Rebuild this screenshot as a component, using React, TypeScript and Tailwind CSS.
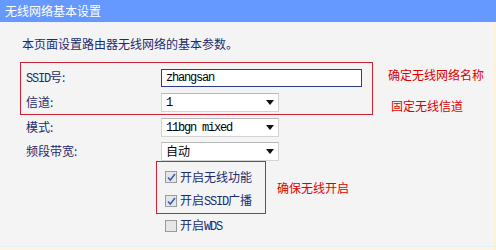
const CJK = "font-['Noto_Sans_CJK_SC','Noto_Sans',sans-serif]";
const MONO = "font-['Liberation_Mono','Noto_Sans_CJK_SC',monospace]";

function Latin({ children }: { children: React.ReactNode }) {
  return <span className={`${MONO} text-[12px] tracking-[-1.2px]`}>{children}</span>;
}

function Select({ value }: { value: React.ReactNode }) {
  return (
    <div className="flex h-[19px] w-[118px] items-center justify-between border border-[#d4d4d4] border-t-[#b8b8b8] bg-white pl-[4px] pr-[4px] text-[12px] text-black">
      <span className="leading-none">{value}</span>
      <svg width="8" height="5" viewBox="0 0 8 5">
        <path d="M0 0h8L4 5z" fill="#111" />
      </svg>
    </div>
  );
}

function Checkbox({ checked }: { checked: boolean }) {
  return (
    <div className="flex h-[12px] w-[12px] items-center justify-center border border-[#9a9a9a] bg-[#e6e6e6]">
      {checked && (
        <svg width="9" height="9" viewBox="0 0 9 9">
          <path d="M1 4.5l2.3 2.5L8 1" stroke="#3a5fb0" strokeWidth="1.6" fill="none" />
        </svg>
      )}
    </div>
  );
}

function Row({ label, children }: { label: React.ReactNode; children: React.ReactNode }) {
  return (
    <div className="flex h-[24px] items-center">
      <div className="w-[135px] text-[12px] text-[#1c2b6e]">{label}</div>
      {children}
    </div>
  );
}

function CheckRow({ checked, label }: { checked: boolean; label: React.ReactNode }) {
  return (
    <div className="flex h-[24px] items-center gap-[3px] text-[12px] text-[#1c2b6e]">
      <Checkbox checked={checked} />
      <span>{label}</span>
    </div>
  );
}

export default function App() {
  return (
    <div className={`${CJK} relative h-[250px] w-[496px] overflow-hidden bg-[#f4f4f4]`}>
      <div className="flex h-[22px] items-center bg-[#6699ff] pl-[5px] text-[12px] text-white">
        无线网络基本设置
      </div>
      <div className="h-px bg-[#eef3ff]" />

      <div className="pl-[22px] pt-[14px] text-[12px] leading-[14px] text-[#1c2b6e]">
        本页面设置路由器无线网络的基本参数。
      </div>

      <div className="mt-[11px] flex items-start">
        <div className="ml-[20px] w-[353px] border border-[#cc2233] pl-[5px] pt-[3px]">
          <Row label={<><Latin>SSID</Latin>号:</>}>
            <div className="flex h-[18px] w-[201px] items-center border border-[#2b3a86] bg-white pl-[4px] text-black">
              <Latin>zhangsan</Latin>
            </div>
          </Row>
          <Row label="信道:">
            <Select value={<Latin>1</Latin>} />
          </Row>
        </div>
        <div className="ml-[15px] flex flex-col text-[12px] text-[#dd0000]">
          <span className="mt-[6px] leading-[14px]">确定无线网络名称</span>
          <span className="ml-[3px] mt-[17px] leading-[14px]">固定无线信道</span>
        </div>
      </div>

      <div className="pl-[26px]">
        <Row label="模式:">
          <Select value={<Latin>11bgn mixed</Latin>} />
        </Row>
        <Row label="频段带宽:">
          <Select value="自动" />
        </Row>
      </div>

      <div className="-mt-[2px] flex items-start">
        <div className="ml-[156px] w-[110px] border border-[#cc2233] pl-[8px] pt-[3px]">
          <CheckRow checked label="开启无线功能" />
          <CheckRow checked label={<>开启<Latin>SSID</Latin>广播</>} />
        </div>
        <span className="ml-[11px] mt-[20px] text-[12px] leading-[14px] text-[#dd0000]">确保无线开启</span>
      </div>
      <div className="pl-[165px]">
        <CheckRow checked={false} label={<>开启<Latin>WDS</Latin></>} />
      </div>

      <div className="absolute bottom-0 left-0 h-[4px] w-full border-t border-[#e4f0ff] bg-[#fff4dc]" />
      <div className="absolute right-0 top-[22px] h-full w-[2px] bg-[#fff1d6]" />
    </div>
  );
}
